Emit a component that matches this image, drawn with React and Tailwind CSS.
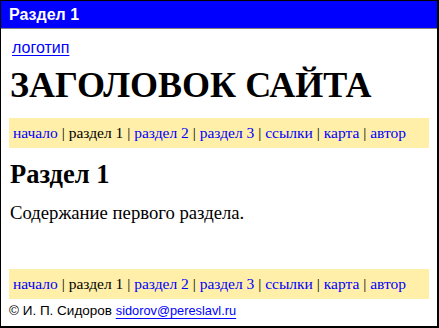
export default function App() {
  const items = [
    ["начало", true],
    ["раздел 1", false],
    ["раздел 2", true],
    ["раздел 3", true],
    ["ссылки", true],
    ["карта", true],
    ["автор", true],
  ];
  const Nav = () => (
    <div className="bg-[#ffefa8] px-[4px] h-[30px] leading-[30px] text-[15.5px] whitespace-pre" style={{ fontFamily: '"Liberation Serif", serif' }}>
      {items.map(([t, link], i) => (
        <span key={i}>
          {i > 0 ? " | " : ""}
          <span className={link ? "text-[#0000ff]" : "text-black"}>{t}</span>
        </span>
      ))}
    </div>
  );
  return (
    <div className="w-[439px] h-[328px] bg-white border border-black border-r-2 border-b-2 flex flex-col overflow-hidden">
      <div className="h-[28px] bg-[#0000ff] text-white font-bold text-[16px] px-[8px] flex items-center border-b border-[#808080]" style={{ fontFamily: '"Liberation Sans", sans-serif' }}>
        Раздел 1
      </div>
      <div className="flex-1 px-[8px] flex flex-col">
        <div className="mt-[10px] pl-[3px] text-[16px] leading-[18px]" style={{ fontFamily: '"Liberation Sans", sans-serif' }}>
          <span className="text-[#0000ff] underline underline-offset-[2px]">логотип</span>
        </div>
        <div className="mt-[8px] pl-[1px] font-bold text-[36px] leading-[40px] text-black" style={{ fontFamily: '"Liberation Serif", serif' }}>
          ЗАГОЛОВОК САЙТА
        </div>
        <div className="mt-[13px]">
          <Nav />
        </div>
        <div className="mt-[10px] pl-[1px] font-bold text-[26.5px] leading-[32px]" style={{ fontFamily: '"Liberation Serif", serif' }}>
          Раздел 1
        </div>
        <div className="mt-[12px] pl-[1px] text-[18.7px] leading-[22px]" style={{ fontFamily: '"Liberation Serif", serif' }}>
          Содержание первого раздела.
        </div>
        <div className="mt-auto">
          <Nav />
        </div>
        <div className="h-[27px] pt-[3px] text-[13.5px] leading-[18px] text-black whitespace-pre" style={{ fontFamily: '"Liberation Sans", sans-serif' }}>
          {"© И. П. Сидоров "}
          <span className="text-[12.8px] text-[#0000ff] underline underline-offset-[3px]">sidorov@pereslavl.ru</span>
        </div>
      </div>
    </div>
  );
}
